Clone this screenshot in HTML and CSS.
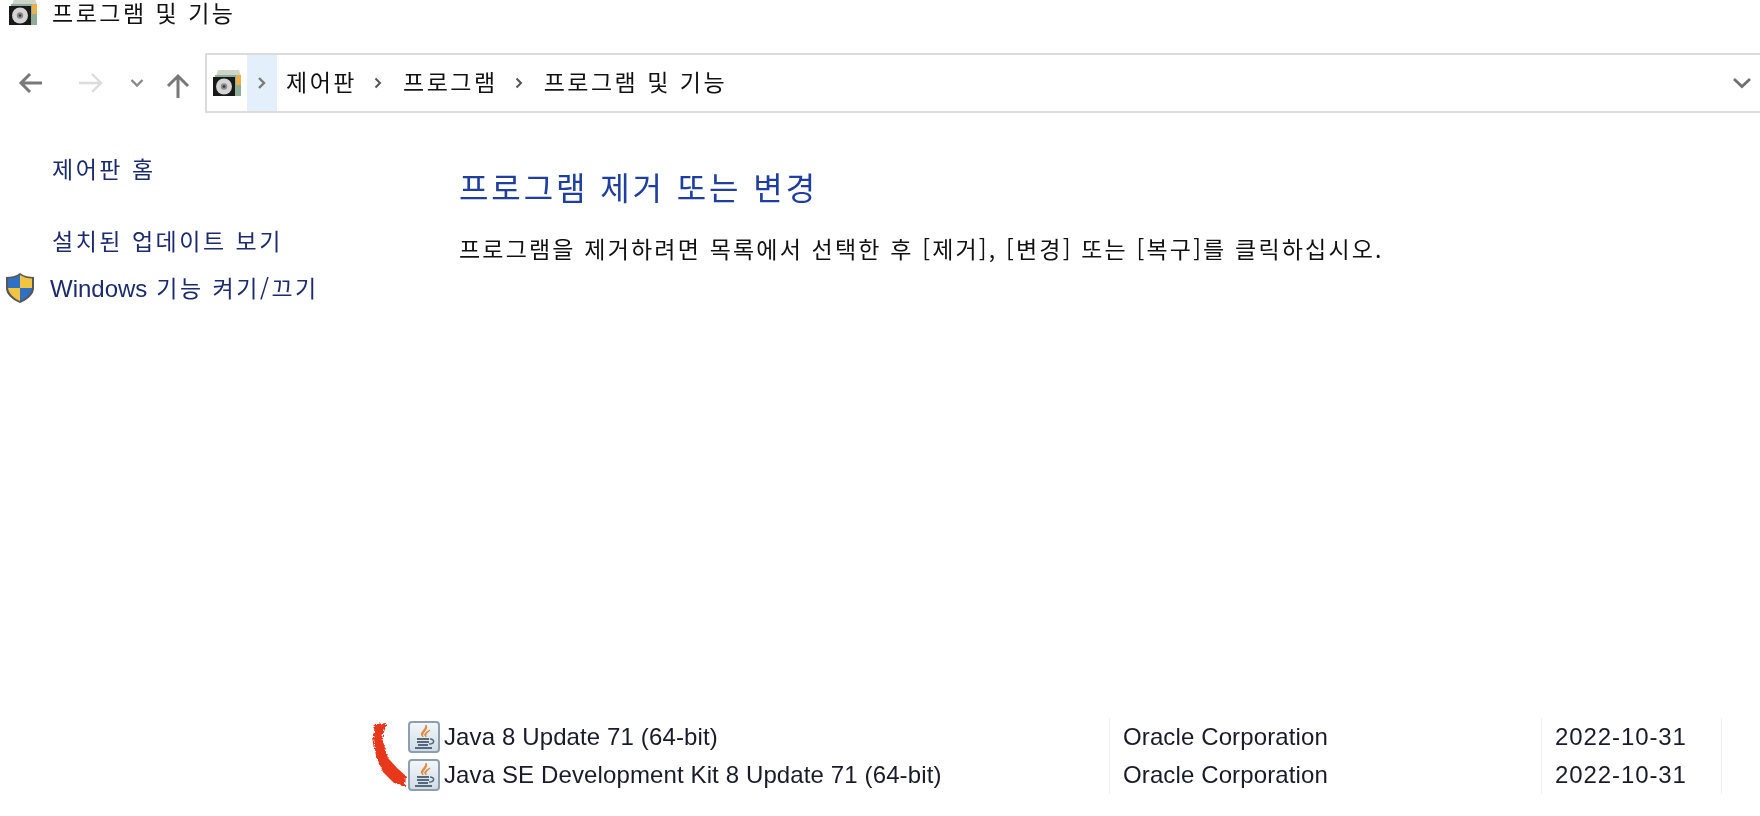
FILE: index.html
```html
<!DOCTYPE html>
<html lang="ko">
<head>
  <meta charset="UTF-8" />
  <title>프로그램 및 기능</title>
  <link rel="stylesheet" href="styles.css">
</head>
<body>
  <svg width="0" height="0" class="defs">
    <defs>
      <linearGradient id="javabg" x1="0" y1="0" x2="0" y2="1">
        <stop offset="0" stop-color="#f4f7fa"/>
        <stop offset="1" stop-color="#cfdbe6"/>
      </linearGradient>
      <filter id="rough" x="-20%" y="-20%" width="140%" height="140%">
        <feTurbulence type="fractalNoise" baseFrequency="0.45" numOctaves="2" seed="4"/>
        <feDisplacementMap in="SourceGraphic" scale="5"/>
      </filter>
      <symbol id="cpl" viewBox="0 0 30 30">
        <path d="M4 8 L6 2 H27 L29 8 Z" fill="#cfd4c9"/>
        <rect x="3" y="7" width="26" height="21" fill="#8fae98"/>
        <rect x="24" y="7" width="5" height="10" fill="#e9b04e"/>
        <rect x="1" y="9" width="22" height="19" fill="#191919"/>
        <circle cx="12" cy="18.500" r="8" fill="#d4d4d4"/>
        <circle cx="12" cy="18.500" r="3.200" fill="#8a8a8a"/>
        <circle cx="12" cy="18.500" r="1.300" fill="#333"/>
      </symbol>
      <symbol id="java" viewBox="0 0 32 32">
        <rect x="1" y="1" width="30" height="30" rx="3" fill="url(#javabg)" stroke="#8d9fae" stroke-width="2"/>
        <path d="M18 4 C21 9 13 11 15 16 C10 12 18 9 18 4 Z M22 9 C21 11 17 12 18 16 C15 13 18 11 22 9 Z" fill="#e08a3c" stroke="#e08a3c" stroke-width="1"/>
        <path d="M9 18 H21 M9 21 H21 M10 24 H20 M7 27 H24" stroke="#56697a" stroke-width="1.800" fill="none"/>
        <path d="M22 18 C27 18 27 23 21 23" stroke="#56697a" stroke-width="1.500" fill="none"/>
      </symbol>
    </defs>
  </svg>

  <header class="titlebar">
    <svg class="title-icon"><use href="#cpl"/></svg>
    <span class="title-text">프로그램 및 기능</span>
  </header>

  <nav class="navrow">
    <div class="nav-btns">
      <svg class="nav-back" width="26" height="22" viewBox="0 0 26 22"><path d="M24 11 H3 M12 2 L3 11 L12 20" fill="none" stroke="#787878" stroke-width="3"/></svg>
      <svg class="nav-fwd" width="26" height="22" viewBox="0 0 26 22"><path d="M1 11 H23 M14 2 L23 11 L14 20" fill="none" stroke="#dcdcdc" stroke-width="2.400"/></svg>
      <svg class="nav-down" width="14" height="10" viewBox="0 0 14 10"><path d="M1.500 2 L7 7.500 L12.500 2" fill="none" stroke="#8a8a8a" stroke-width="2.400"/></svg>
      <svg class="nav-up" width="24" height="26" viewBox="0 0 24 26"><path d="M12 25 V3 M2 13 L12 3 L22 13" fill="none" stroke="#787878" stroke-width="3"/></svg>
    </div>
    <div class="addressbar">
      <svg class="addr-icon"><use href="#cpl"/></svg>
      <div class="addr-root"><svg width="10" height="14" viewBox="0 0 10 14"><path d="M2 2 L7 7 L2 12" fill="none" stroke="#7a7a7a" stroke-width="2.400"/></svg></div>
      <span class="crumb">제어판</span>
      <svg class="crumb-sep" width="10" height="14" viewBox="0 0 10 14"><path d="M2.500 2.500 L7 7 L2.500 11.500" fill="none" stroke="#555" stroke-width="2"/></svg>
      <span class="crumb">프로그램</span>
      <svg class="crumb-sep" width="10" height="14" viewBox="0 0 10 14"><path d="M2.500 2.500 L7 7 L2.500 11.500" fill="none" stroke="#555" stroke-width="2"/></svg>
      <span class="crumb">프로그램 및 기능</span>
      <svg class="addr-drop" width="20" height="12" viewBox="0 0 20 12"><path d="M2 2 L10 9.500 L18 2" fill="none" stroke="#707070" stroke-width="2.800"/></svg>
    </div>
  </nav>

  <div class="body-wrap">
    <aside class="sidebar">
      <a class="side-link side-home">제어판 홈</a>
      <a class="side-link side-updates">설치된 업데이트 보기</a>
      <div class="side-feature">
        <svg class="shield" width="30" height="32" viewBox="0 0 30 32">
          <path d="M15 1 C19 4 24 5 29 5 V16 C29 23 22 28 15 31 C8 28 1 23 1 16 V5 C6 5 11 4 15 1 Z" fill="#55585a"/>
          <path d="M15 3 V16 H3 V6.500 C7 6.500 11 5.500 15 3 Z" fill="#2f6fc4"/>
          <path d="M15 3 C19 5.500 23 6.500 27 6.500 V16 H15 Z" fill="#f3c43f"/>
          <path d="M3 16 H15 V29 C9 26.500 4 22 3 16 Z" fill="#f3c43f"/>
          <path d="M15 16 H27 C26 22 21 26.500 15 29 Z" fill="#2f6fc4"/>
        </svg>
        <a class="side-link"><span class="latin">Windows</span> 기능 켜기/끄기</a>
      </div>
    </aside>

    <main class="content">
      <h1 class="heading">프로그램 제거 또는 변경</h1>
      <p class="desc">프로그램을 제거하려면 목록에서 선택한 후 [제거], [변경] 또는 [복구]를 클릭하십시오.</p>

      <div class="list">
        <svg class="mark" width="50" height="76" viewBox="0 0 50 76">
          <path d="M5 10 L17 9 L12 24 L18 44 L27 54 L36 62 L35 72 L24 69 L13 58 L6 42 L3 24 Z" fill="#e8391c" filter="url(#rough)"/>
        </svg>
        <div class="row">
          <div class="cell-name"><svg class="java"><use href="#java"/></svg><span>Java 8 Update 71 (64-bit)</span></div>
          <div class="cell-pub">Oracle Corporation</div>
          <div class="cell-date">2022-10-31</div>
          <div class="cell-end"></div>
        </div>
        <div class="row">
          <div class="cell-name"><svg class="java"><use href="#java"/></svg><span>Java SE Development Kit 8 Update 71 (64-bit)</span></div>
          <div class="cell-pub">Oracle Corporation</div>
          <div class="cell-date">2022-10-31</div>
          <div class="cell-end"></div>
        </div>
      </div>
    </main>
  </div>
</body>
</html>
```

FILE: styles.css
```css
* {
  box-sizing: border-box;
}

html, body {
  height: 100%;
}

body {
  margin: 0;
  height: 816px;
  overflow: hidden;
  display: flex;
  flex-direction: column;
  background: #fff;
  color: #111;
  font-family: "Noto Sans CJK KR", "Noto Sans", sans-serif;
  filter: blur(0.4px);
}

.defs {
  position: absolute;
}

.titlebar {
  height: 24px;
  display: flex;
  align-items: flex-start;
  padding-left: 8px;
}
.title-icon {
  width: 30px;
  height: 30px;
  margin-top: -3px;
}
.title-text {
  margin-left: 14px;
  font-size: 23px;
  letter-spacing: 2.5px;
  line-height: 24px;
}

.navrow {
  display: flex;
  align-items: stretch;
  height: 60px;
  margin-top: 29px;
}
.nav-btns {
  width: 205px;
  display: flex;
  align-items: center;
  padding-left: 18px;
}
.nav-fwd {
  margin-left: 34px;
}
.nav-down {
  margin-left: 26px;
}
.nav-up {
  margin-left: 22px;
  margin-top: 5px;
}

.addressbar {
  flex: 1;
  display: flex;
  align-items: center;
  border: 2px solid #dcdcdc;
  border-right: none;
  font-size: 23px;
  letter-spacing: 2.5px;
}
.addr-icon {
  width: 30px;
  height: 30px;
  margin-left: 5px;
}
.addr-root {
  width: 30px;
  height: 100%;
  margin-left: 5px;
  background: #e3effb;
  display: flex;
  align-items: center;
  justify-content: center;
}
.crumb {
  margin-left: 9px;
  margin-bottom: 4px;
}
.crumb-sep {
  margin-left: 16px;
  margin-right: 11px;
}
.addr-drop {
  margin-left: auto;
  margin-right: 8px;
}

.body-wrap {
  flex: 1;
  display: flex;
}

.sidebar {
  width: 459px;
  display: flex;
  flex-direction: column;
  font-size: 23px;
  letter-spacing: 2.5px;
  color: #1c2a6e;
  padding-top: 40px;
}
.side-link {
  line-height: 30px;
}
.side-home {
  padding-left: 52px;
}
.side-updates {
  padding-left: 52px;
  margin-top: 42px;
}
.side-feature {
  display: flex;
  align-items: center;
  padding-left: 5px;
  margin-top: 17px;
}
.side-feature .side-link {
  margin-left: 15px;
}
.latin {
  font-family: "Liberation Sans", sans-serif;
  font-size: 24px;
  letter-spacing: 0;
}
.shield {
  flex: none;
}

.content {
  flex: 1;
  display: flex;
  flex-direction: column;
  padding-top: 53px;
  padding-bottom: 22px;
}
.heading {
  margin: 0;
  font-size: 32px;
  letter-spacing: 2.9px;
  line-height: 40px;
  font-weight: 400;
  color: #1f3f9f;
}
.desc {
  margin: 27px 0 0;
  font-size: 23px;
  letter-spacing: 2.18px;
  line-height: 30px;
}

.list {
  position: relative;
  margin-top: auto;
  margin-left: -51px;
  font-size: 24px;
  letter-spacing: 0.12px;
  font-family: "Liberation Sans", sans-serif;
  color: #1a1a2a;
}
.mark {
  position: absolute;
  left: -38px;
  top: -4px;
}
.row {
  display: flex;
  height: 38px;
  align-items: stretch;
}
.cell-name {
  width: 702px;
  display: flex;
  align-items: center;
  border-right: 1px solid #eef2f6;
}
.java {
  width: 32px;
  height: 32px;
  flex: none;
  margin-right: 4px;
}
.cell-pub {
  width: 432px;
  padding-left: 13px;
  display: flex;
  align-items: center;
  border-right: 1px solid #eef2f6;
}
.cell-date {
  width: 180px;
  padding-left: 13px;
  letter-spacing: 0.9px;
  display: flex;
  align-items: center;
  border-right: 1px solid #eef2f6;
}
```
